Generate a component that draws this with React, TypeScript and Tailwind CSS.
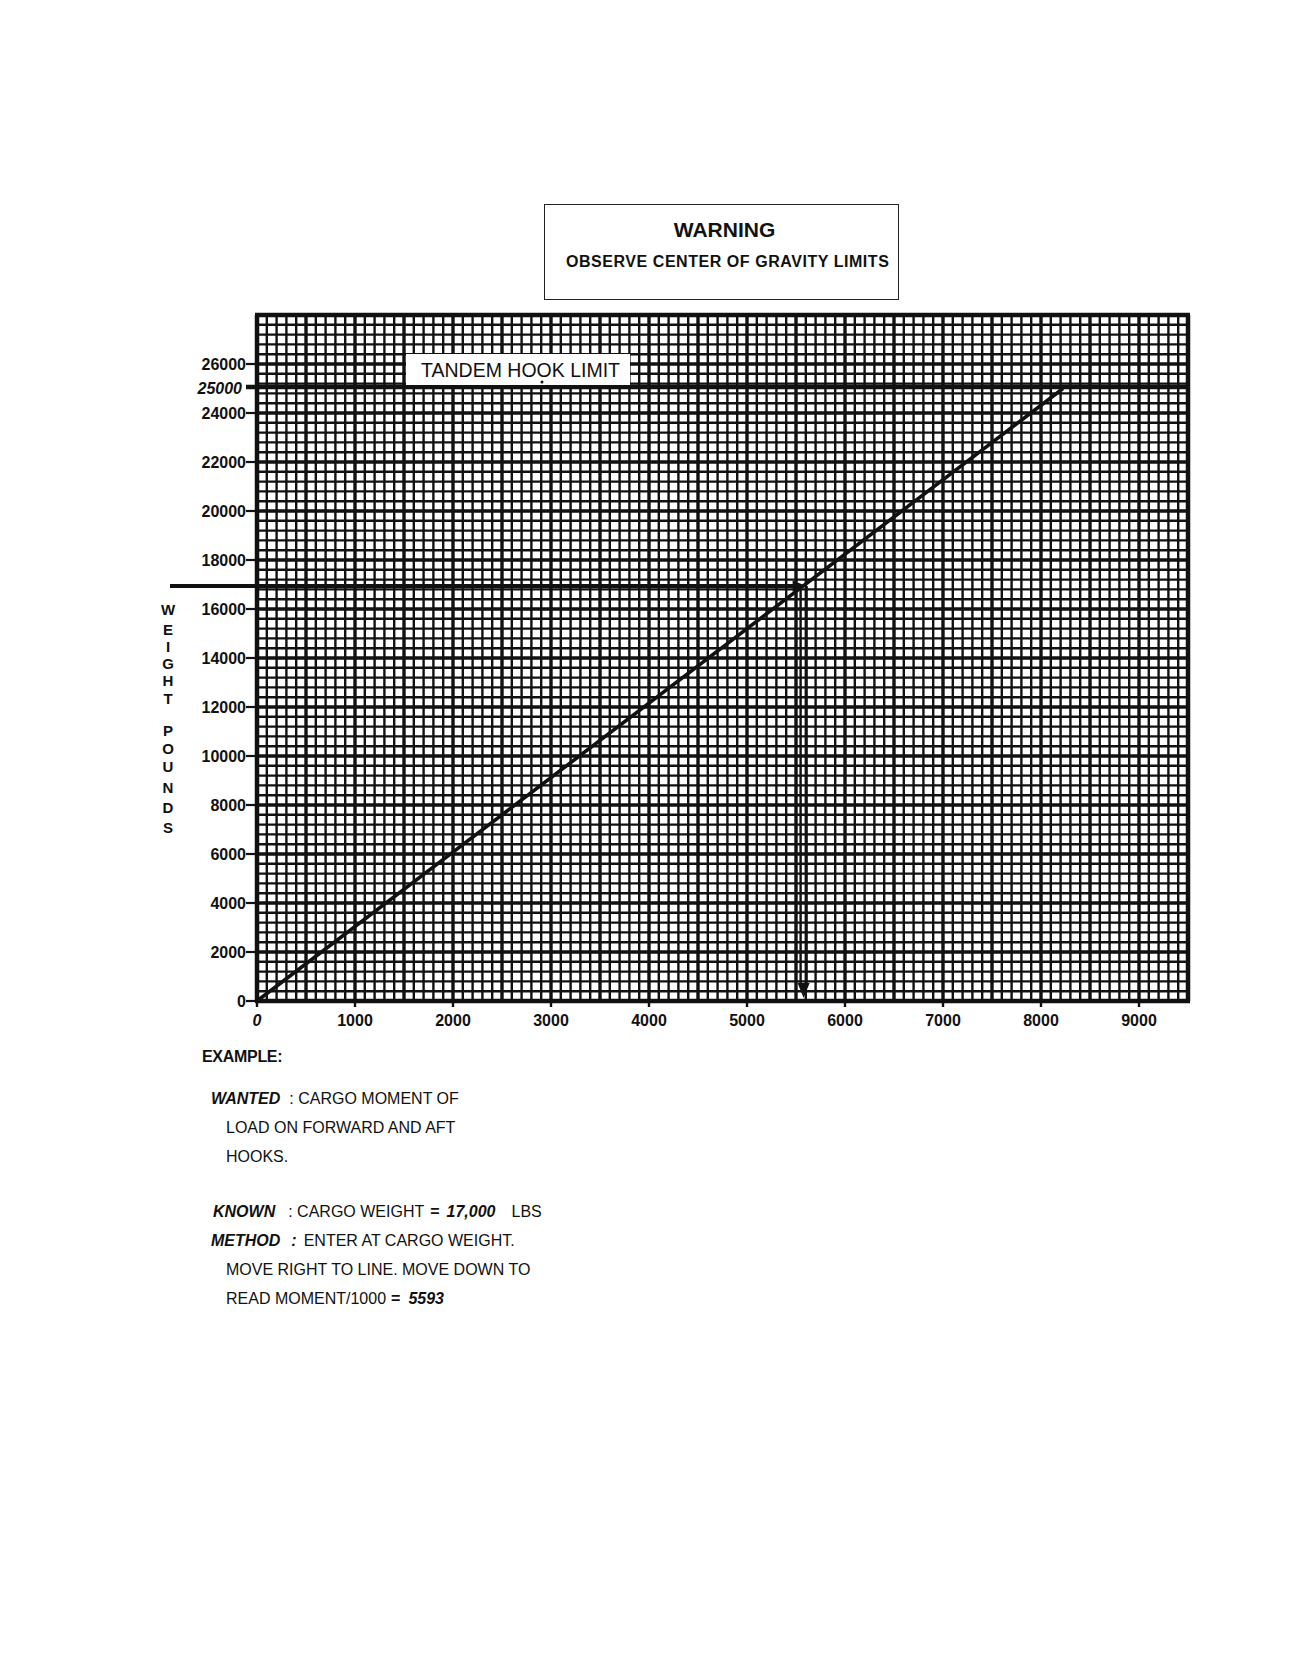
import React from "react";

const X0 = 257;
const Y0 = 1001;
const C = 9.8;
const FONT = "'Liberation Sans', Arial, sans-serif";
const INK = "#111";

function Chart() {
  const vLines = Array.from({ length: 96 }, (_, i) => i);
  const hLines = Array.from({ length: 71 }, (_, j) => j);
  const top = Y0 - 70 * C;
  const right = X0 + 95 * C;
  const yLabels = [0, 2000, 4000, 6000, 8000, 10000, 12000, 14000, 16000, 18000, 20000, 22000, 24000, 26000];
  const xLabels = [0, 1000, 2000, 3000, 4000, 5000, 6000, 7000, 8000, 9000];
  const yOf = (w: number) => Y0 - w * 0.0245;
  const xOf = (m: number) => X0 + m * 0.098;
  const letters: [string, number][] = [
    ["W", 609], ["E", 629], ["I", 646], ["G", 663], ["H", 680], ["T", 698],
    ["P", 730], ["O", 748], ["U", 766], ["N", 787], ["D", 807], ["S", 827],
  ];
  const y17 = 586;
  const xHit = xOf(5593) + 1.5;
  return (
    <svg width={1294} height={740} viewBox="0 300 1294 740" className="block">
      {/* grid */}
      {vLines.map((i) => {
        const x = X0 + i * C;
        const w = i === 0 || i === 95 ? 4.5 : i % 5 === 0 ? 3.4 : 2.4;
        return <line key={"v" + i} x1={x} y1={top} x2={x} y2={Y0} stroke={INK} strokeWidth={w} />;
      })}
      {hLines.map((j) => {
        const y = Y0 - j * C;
        const w = j === 0 || j === 70 ? 4.5 : j % 5 === 0 ? 3.4 : 2.4;
        return <line key={"h" + j} x1={X0 - 2} y1={y} x2={right + 2} y2={y} stroke={INK} strokeWidth={w} />;
      })}
      {/* tandem hook limit line */}
      <line x1={246} y1={387} x2={right} y2={387} stroke={INK} strokeWidth={4.5} />
      {/* diagonal */}
      <line x1={X0} y1={Y0} x2={xOf(8225)} y2={yOf(25000)} stroke={INK} strokeWidth={3.6} />
      {/* horizontal arrow */}
      <line x1={170} y1={y17} x2={xHit - 12} y2={y17} stroke={INK} strokeWidth={4} />
      <polygon points={`${xHit - 14},${y17 - 5.5} ${xHit},${y17} ${xHit - 14},${y17 + 5.5}`} fill={INK} />
      {/* vertical arrow */}
      <line x1={xHit - 6} y1={y17} x2={xHit - 6} y2={985} stroke={INK} strokeWidth={2.4} />
      <line x1={xHit} y1={y17} x2={xHit} y2={985} stroke={INK} strokeWidth={2.4} />
      <polygon points={`${xHit - 9},${983} ${xHit + 3},${983} ${xHit - 3},${998}`} fill={INK} />
      {/* label box */}
      <rect x={406} y={354} width={224} height={31} fill="#fff" />
      <text x={421} y={377} fontFamily={FONT} fontSize={19.5} fill={INK}>
        TANDEM HOOK LIMIT
      </text>
      <circle cx={542} cy={382} r={1.5} fill={INK} />
      {/* y labels */}
      {yLabels.map((w) => (
        <g key={"yl" + w}>
          <text x={246} y={yOf(w) + 5.7} textAnchor="end" fontFamily={FONT} fontSize={16} fontWeight="bold" fill={INK}>
            {w}
          </text>
          <line x1={246} y1={yOf(w)} x2={X0} y2={yOf(w)} stroke={INK} strokeWidth={2.2} />
        </g>
      ))}
      <text x={242} y={388 + 5.7} textAnchor="end" fontFamily={FONT} fontSize={16} fontWeight="bold" fontStyle="italic" fill={INK}>
        25000
      </text>
      {/* x labels */}
      {xLabels.map((m) => (
        <g key={"xl" + m}>
          <line x1={xOf(m)} y1={Y0} x2={xOf(m)} y2={Y0 + 6} stroke={INK} strokeWidth={2.4} />
          <text
            x={xOf(m)}
            y={1026}
            textAnchor="middle"
            fontFamily={FONT}
            fontSize={16}
            fontWeight="bold"
            fontStyle={m === 0 ? "italic" : "normal"}
            fill={INK}
          >
            {m}
          </text>
        </g>
      ))}
      {/* vertical axis title */}
      {letters.map(([ch, y], k) => (
        <text key={"lt" + k} x={168} y={y + 5.5} textAnchor="middle" fontFamily={FONT} fontSize={15} fontWeight="bold" fill={INK}>
          {ch}
        </text>
      ))}
    </svg>
  );
}

export default function App() {
  return (
    <div className="w-[1294px] h-[1667px] bg-white flex flex-col font-['Liberation_Sans',Arial,sans-serif] text-[#111] overflow-hidden">
      {/* Warning box */}
      <div className="mt-[204px] ml-[544px] w-[355px] h-[96px] border-[1.5px] border-[#222] flex flex-col">
        <div className="mt-[12px] h-[26px] leading-[26px] text-[21px] font-bold text-center pl-[6px]">WARNING</div>
        <div className="mt-[9px] h-[20px] leading-[20px] text-[16px] font-bold tracking-[0.55px] pl-[21px] whitespace-nowrap">
          OBSERVE CENTER OF GRAVITY LIMITS
        </div>
      </div>

      <Chart />

      {/* Example text */}
      <div className="flex flex-col text-[16px] whitespace-nowrap">
        <div className="mt-[3px] h-[28px] flex items-center ml-[202px] font-bold tracking-[-0.3px]">EXAMPLE:</div>
        <div className="mt-[14px] h-[28px] flex items-center ml-[211px]">
          <span className="font-bold italic">WANTED</span>
          <span className="ml-[9px]">: CARGO MOMENT OF</span>
        </div>
        <div className="h-[29px] flex items-center ml-[226px]">LOAD ON FORWARD AND AFT</div>
        <div className="h-[29px] flex items-center ml-[226px]">HOOKS.</div>
        <div className="mt-[27px] h-[28px] flex items-center ml-[213px]">
          <span className="font-bold italic">KNOWN</span>
          <span className="ml-[13px]">: CARGO WEIGHT</span>
          <span className="ml-[6px] font-bold">=</span>
          <span className="ml-[7px] font-bold italic">17,000</span>
          <span className="ml-[16px]">LBS</span>
        </div>
        <div className="h-[29px] flex items-center ml-[211px]">
          <span className="font-bold italic">METHOD</span>
          <span className="ml-[11px] font-bold italic">:</span>
          <span className="ml-[7px]">ENTER AT CARGO WEIGHT.</span>
        </div>
        <div className="h-[29px] flex items-center ml-[226px]">MOVE RIGHT TO LINE. MOVE DOWN TO</div>
        <div className="h-[29px] flex items-center ml-[226px]">
          <span>READ MOMENT/1000</span>
          <span className="ml-[5px] font-bold">=</span>
          <span className="ml-[8px] font-bold italic">5593</span>
        </div>
      </div>
    </div>
  );
}
